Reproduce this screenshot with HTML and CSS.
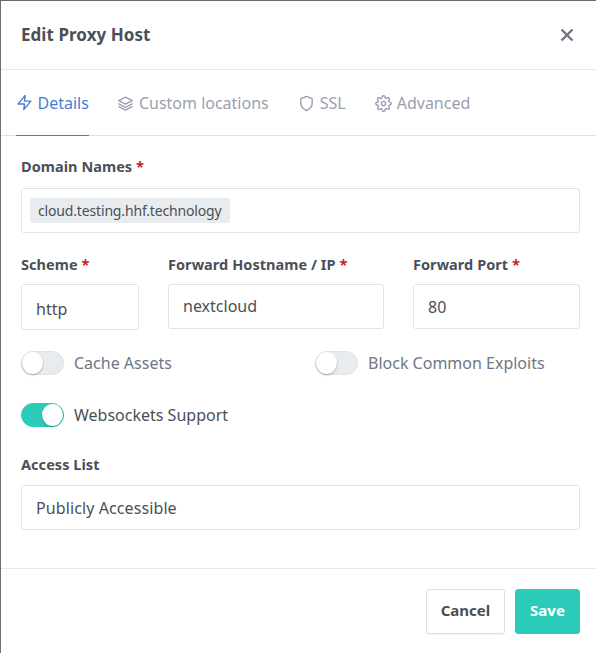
FILE: index.html
```html
<!DOCTYPE html>
<html lang="en">
<head>
<meta charset="utf-8">
<title>Edit Proxy Host</title>
<link rel="stylesheet" href="styles.css">
</head>
<body>
<div class="modal">
  <header class="modal-header">
    <h2 class="modal-title">Edit Proxy Host</h2>
    <svg class="close" viewBox="0 0 16 16" aria-label="Close"><path d="M2.500 2.500l11 11M13.500 2.500l-11 11"/></svg>
  </header>
  <nav class="tabs">
    <a class="tab active">
      <svg class="ico" viewBox="0 0 24 24"><path d="M13 2L3 14h9l-1 8 10-12h-9l1-8z"/></svg>Details
    </a>
    <a class="tab">
      <svg class="ico" viewBox="0 0 24 24"><path d="M12 3L2.500 8 12 13l9.500-5L12 3z"/><path d="M2.500 12.500L12 17.500l9.500-5"/><path d="M2.500 16.500L12 21.500l9.500-5"/></svg>Custom locations
    </a>
    <a class="tab">
      <svg class="ico" viewBox="0 0 24 24"><path d="M12 22s8-4 8-10V5l-8-3-8 3v7c0 6 8 10 8 10z"/></svg>SSL
    </a>
    <a class="tab">
      <svg class="ico" viewBox="0 0 24 24"><circle cx="12" cy="12" r="3"/><path d="M19.400 15a1.650 1.650 0 0 0 .33 1.820l.06.06a2 2 0 1 1-2.830 2.830l-.06-.06a1.650 1.650 0 0 0-2.800 1.170V21a2 2 0 1 1-4 0v-.09a1.650 1.650 0 0 0-2.880-1.110l-.06.06a2 2 0 1 1-2.830-2.830l.06-.06a1.650 1.650 0 0 0-1.170-2.800H3a2 2 0 1 1 0-4h.09a1.650 1.650 0 0 0 1.110-2.880l-.06-.06a2 2 0 1 1 2.830-2.830l.06.06a1.650 1.650 0 0 0 1.820.33H9a1.650 1.650 0 0 0 1-1.510V3a2 2 0 1 1 4 0v.09a1.650 1.650 0 0 0 2.800 1.170l.06-.06a2 2 0 1 1 2.830 2.830l-.06.06a1.650 1.650 0 0 0-.33 1.820V9a1.650 1.650 0 0 0 1.510 1H21a2 2 0 1 1 0 4h-.09a1.650 1.650 0 0 0-1.510 1z"/></svg>Advanced
    </a>
  </nav>
  <form class="body">
    <label class="label">Domain Names <span class="req">*</span></label>
    <div class="field tags"><span class="tag">cloud.testing.hhf.technology</span></div>
    <div class="row-three">
      <div class="col">
        <label class="label">Scheme <span class="req">*</span></label>
        <div class="field scheme">http</div>
      </div>
      <div class="col">
        <label class="label">Forward Hostname / IP <span class="req">*</span></label>
        <div class="field host">nextcloud</div>
      </div>
      <div class="col">
        <label class="label">Forward Port <span class="req">*</span></label>
        <div class="field port">80</div>
      </div>
    </div>
    <div class="switches">
      <div class="switch first"><span class="track"><span class="knob"></span></span><span class="switch-text">Cache Assets</span></div>
      <div class="switch"><span class="track"><span class="knob"></span></span><span class="switch-text">Block Common Exploits</span></div>
    </div>
    <div class="switch ws"><span class="track on"><span class="knob"></span></span><span class="switch-text on-text">Websockets Support</span></div>
    <label class="label">Access List</label>
    <div class="field access">Publicly Accessible</div>
  </form>
  <footer class="footer">
    <button type="button" class="btn cancel">Cancel</button>
    <button type="button" class="btn save">Save</button>
  </footer>
</div>
</body>
</html>
```
FILE: styles.css
```css
* { box-sizing: border-box; }
html, body { margin: 0; height: 100%; background: #fff; }
body { font-family: "Noto Sans", "Open Sans", sans-serif; color: #495057; }
.modal { width: 596px; height: 653px; border-top: 1px solid #6a6a6a; border-left: 1px solid #6f6f6f; overflow: hidden; }
.modal-header { height: 69px; display: flex; align-items: center; justify-content: space-between; padding: 0 21px 1px 20px; border-bottom: 1px solid #e6e8ea; }
.modal-title { margin: 0; font-size: 17px; font-weight: 700; letter-spacing: .05px; color: #495057; }
.close { width: 16px; height: 16px; fill: none; stroke: #6e7680; stroke-width: 2.400; }
.tabs { height: 66px; display: flex; padding-left: 15px; border-bottom: 1px solid #dee1e4; }
.tab { display: flex; align-items: center; gap: 4.500px; height: 66px; font-size: 16px; color: #9aa0b0; padding-right: 29.500px; }
.tab.active { color: #467fcf; border-bottom: 1px solid #467fcf; margin-bottom: -1px; padding-right: 0; margin-right: 28.500px; }
.ico { width: 17px; height: 17px; fill: none; stroke: currentColor; stroke-width: 2; stroke-linecap: round; stroke-linejoin: round; }
.body { padding: 20px 16px 0 20px; }
.label { display: block; font-size: 14.500px; font-weight: 700; letter-spacing: .05px; color: #495057; line-height: 20px; }
.req { color: #cd201f; }
.field { border: 1px solid #dfe3e8; border-radius: 3px; background: #fff; font-size: 16px; color: #495057; }
.tags { margin-top: 12px; height: 45px; display: flex; align-items: center; padding-left: 8px; }
.tag { background: #e9ecef; border-radius: 3px; height: 25px; line-height: 25px; padding: 0 8px; font-size: 14px; letter-spacing: -.16px; }
.row-three { display: flex; margin-top: 21px; gap: 29px; }
.col:nth-child(1) { width: 118px; }
.col:nth-child(2) { width: 216px; }
.col:nth-child(3) { width: 167px; }
.col .field { margin-top: 10px; display: flex; align-items: center; padding-left: 14px; }
.scheme { height: 46px; padding-top: 4px; }
.host { height: 45px; padding-bottom: 2px; }
.port { height: 45px; }
.switches { display: flex; margin-top: 21px; }
.switch.first { flex: none; width: 294px; }
.switch { display: flex; align-items: center; gap: 10px; height: 24px; }
.track { position: relative; width: 43px; height: 24px; border-radius: 12px; background: #e9ecef; border: 1px solid #dee2e6; flex: none; }
.knob { position: absolute; left: 0; top: 0; width: 21px; height: 22px; border-radius: 50%; background: #fff; box-shadow: 0 1px 2px rgba(0,0,0,.3); }
.track.on { background: #2bcbba; border-color: #2bcbba; }
.track.on .knob { left: 20px; }
.switch-text { font-size: 16px; color: #6e7687; }
.on-text { color: #495057; }
.ws { margin-top: 28px; margin-bottom: 27px; }
.access { margin-top: 11px; height: 45px; display: flex; align-items: center; padding-left: 14px; letter-spacing: .1px; }
.footer { margin-top: 38px; border-top: 1px solid #e6e8ea; display: flex; justify-content: flex-end; gap: 10px; padding: 20px 16px 0 0; }
.btn { height: 45px; border-radius: 3px; font-family: inherit; font-size: 15px; font-weight: 700; padding: 0 0 3px; }
.cancel { width: 79px; background: #fff; border: 1px solid #dce0e6; color: #495057; box-shadow: 0 1px 1px rgba(0,0,0,.05); }
.save { width: 65px; background: #2bcbba; border: 1px solid #2bcbba; color: #fff; }
```
